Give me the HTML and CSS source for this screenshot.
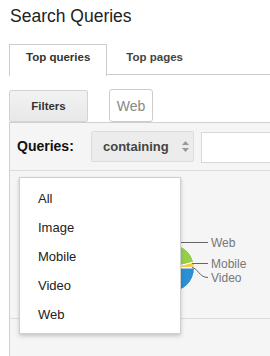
FILE: index.html
```html
<!DOCTYPE html>
<html lang="en">
<head>
    <meta charset="UTF-8">
    <meta name="viewport" content="width=device-width, initial-scale=1.0">
    <title>Search Queries</title>
    <link rel="stylesheet" href="styles.css">
</head>
<body>
    <div class="page">
        <h1 class="title">Search Queries</h1>

        <div class="tabs">
            <div class="tab active">Top queries</div>
            <div class="tab">Top pages</div>
        </div>

        <div class="filter-bar">
            <button class="btn-filters">Filters</button>
            <button class="btn-web">Web</button>
        </div>

        <div class="panel">
            <div class="query-row">
                <span class="query-label">Queries:</span>
                <div class="select">
                    containing
                    <svg class="select-arrows" width="7" height="11" viewBox="0 0 7 11">
                        <polygon points="0,4 3.5,0 7,4" fill="#999"/>
                        <polygon points="0,7 3.5,11 7,7" fill="#999"/>
                    </svg>
                </div>
                <div class="query-input"></div>
            </div>

            <div class="chart">
                <svg width="260" height="147" viewBox="0 0 260 147">
                    <!-- pie: Web / Mobile / Video -->
                    <path d="M160.5,97 L136.5,97 A24,24 0 0 1 183.79,91.19 Z" fill="#97cf4c" stroke="#fff" stroke-width="1"/>
                    <path d="M160.5,97 L183.79,91.19 A24,24 0 0 1 184.49,96.16 Z" fill="#f9cb3c" stroke="#fff" stroke-width="1"/>
                    <path d="M160.5,97 L184.5,97 A24,24 0 0 1 160.5,121 A24,24 0 0 1 136.5,97 Z" fill="#2e8fd5" stroke="#fff" stroke-width="1"/>

                    <g stroke="#666" stroke-width="1" fill="none">
                        <line x1="150" y1="71.5" x2="198" y2="71.5"/>
                        <line x1="182" y1="92.5" x2="198" y2="92.5"/>
                        <path d="M182,96.5 C188,97 189,106.5 198,106.5"/>
                    </g>
                    <g class="chart-labels" fill="#777">
                        <text x="201" y="75.5">Web</text>
                        <text x="201" y="97">Mobile</text>
                        <text x="201" y="110.5">Video</text>
                    </g>
                </svg>
            </div>

            <div class="panel-foot"></div>

            <ul class="menu">
                <li>All</li>
                <li>Image</li>
                <li>Mobile</li>
                <li>Video</li>
                <li>Web</li>
            </ul>
        </div>
    </div>
</body>
</html>
```

FILE: styles.css
```css
body {
    margin: 0;
    overflow: hidden;
    font-family: "Liberation Sans", Arial, sans-serif;
    background: white;
    color: #222;
}

.page {
    padding-left: 9px;
}

.title {
    margin: 6px 0 0 1px;
    font-size: 17.5px;
    font-weight: normal;
    line-height: 20px;
    color: #222;
}

.tabs {
    display: flex;
    margin-top: 18px;
    height: 30px;
    border-bottom: 1px solid #ccc;
}

.tab {
    height: 24px;
    padding: 0 16px 6px;
    line-height: 24px;
    font-size: 11.5px;
    font-weight: bold;
    color: #444;
    border: 1px solid transparent;
    border-bottom: none;
}

.tab + .tab {
    margin-left: 2px;
}

.tab.active {
    color: #333;
    background: white;
    border-color: #ccc;
    height: 25px;
    margin-bottom: -1px;
}

.filter-bar {
    display: flex;
    align-items: flex-end;
    margin-top: 14px;
    height: 33px;
}

.btn-filters {
    width: 79px;
    height: 32px;
    padding: 0;
    font-family: inherit;
    font-size: 11.5px;
    font-weight: bold;
    color: #333;
    background: linear-gradient(#f2f2f2, #e8e8e8);
    border: 1px solid #d3d3d3;
    border-radius: 2px;
}

.btn-web {
    width: 44px;
    height: 33px;
    margin-left: 21px;
    padding: 0;
    font-family: inherit;
    font-size: 14px;
    color: #888;
    background: white;
    border: 1px solid #ccc;
    border-radius: 3px;
}

.panel {
    position: relative;
    overflow: hidden;
    border-top: 1px solid #d0d0d0;
    border-left: 1px solid #d0d0d0;
    background: #f5f5f5;
    height: 240px;
}

.query-row {
    display: flex;
    align-items: flex-start;
    padding: 8px 0 7px 7px;
    border-bottom: 1px solid #dcdcdc;
}

.query-row > * {
    flex-shrink: 0;
}

.query-label {
    width: 74px;
    line-height: 31px;
    font-size: 14px;
    font-weight: bold;
    color: #111;
}

.select {
    display: flex;
    align-items: center;
    box-sizing: border-box;
    width: 103px;
    height: 31px;
    padding-left: 11px;
    font-size: 13px;
    font-weight: bold;
    color: #444;
    background: #ececec;
    border: 1px solid #dcdcdc;
    border-radius: 2px;
}

.select-arrows {
    margin-left: 13px;
}

.query-input {
    box-sizing: border-box;
    width: 140px;
    height: 31px;
    margin: 1px 0 0 7px;
    background: white;
    border: 1px solid #d8d8d8;
}

.chart {
    height: 147px;
    border-bottom: 1px solid #dcdcdc;
}

.chart svg {
    display: block;
}

.chart-labels {
    font-family: "Liberation Sans", Arial, sans-serif;
    font-size: 12px;
}

.menu {
    position: absolute;
    top: 54px;
    left: 9px;
    width: 160px;
    margin: 0;
    padding: 6px 0 4px;
    list-style: none;
    background: white;
    border: 1px solid #cfcfcf;
    box-shadow: 0 2px 4px rgba(0,0,0,0.2);
}

.menu li {
    height: 29px;
    line-height: 29px;
    padding-left: 18px;
    font-size: 13px;
    color: #222;
}
```
